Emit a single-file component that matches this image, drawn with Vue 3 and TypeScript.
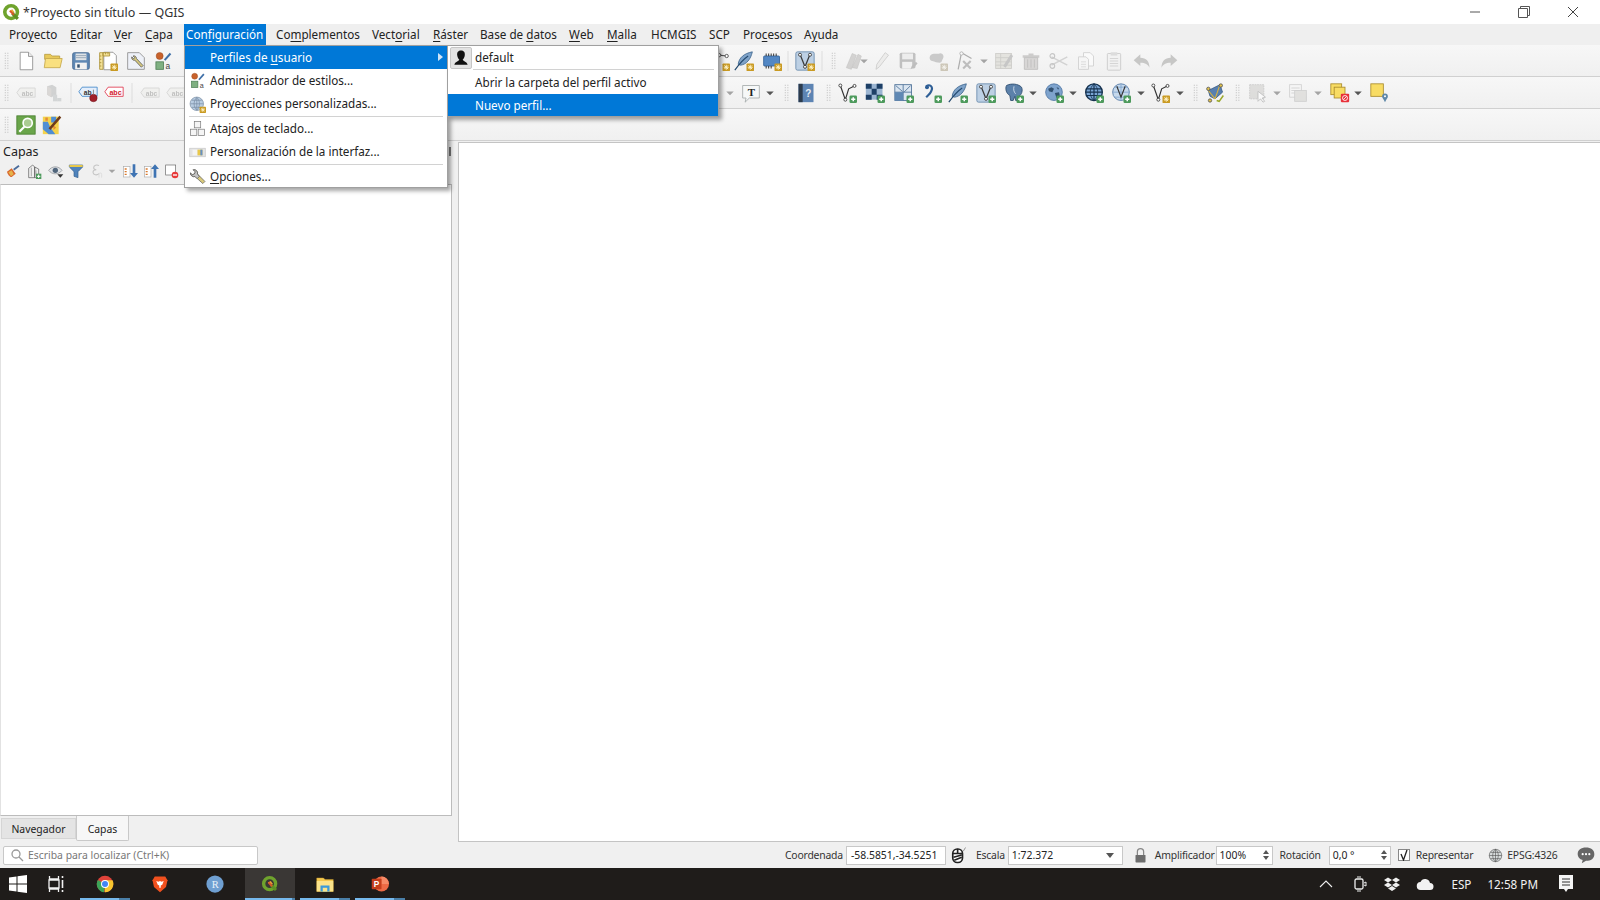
<script setup lang="ts">
interface Tool { x: number; i: string; b?: string; dis?: boolean }

const row1: Tool[] = [
  { x: 7, i: 'dots' }, { x: 26, i: 'new' }, { x: 53, i: 'open' }, { x: 81, i: 'save' }, { x: 108, i: 'saveas', b: 'y' },
  { x: 136, i: 'layout' }, { x: 163, i: 'style' },
  { x: 720, i: 'node', b: 'y' }, { x: 744, i: 'feather', b: 'y' }, { x: 772, i: 'chip', b: 'y' }, { x: 788, i: 'sep' },
  { x: 805, i: 'vlayer', b: 'y' }, { x: 822, i: 'sep' }, { x: 834, i: 'dots' },
  { x: 853, i: 'pencils', dis: true }, { x: 864, i: 'arrow', dis: true }, { x: 881, i: 'pencil', dis: true },
  { x: 908, i: 'saveedit', dis: true }, { x: 938, i: 'cloud', b: 'y', dis: true }, { x: 964, i: 'nodetool', dis: true },
  { x: 984, i: 'arrow', dis: true }, { x: 1004, i: 'table', dis: true }, { x: 1031, i: 'trash', dis: true },
  { x: 1059, i: 'scissors', dis: true }, { x: 1086, i: 'copy', dis: true }, { x: 1114, i: 'paste', dis: true },
  { x: 1142, i: 'undo', dis: true }, { x: 1169, i: 'redo', dis: true }
]

const row2: Tool[] = [
  { x: 7, i: 'dots' }, { x: 26, i: 'abc', dis: true }, { x: 53, i: 'pinmap', dis: true }, { x: 71, i: 'sep' },
  { x: 88, i: 'abcblue' }, { x: 114, i: 'abcred' }, { x: 132, i: 'sep' }, { x: 150, i: 'abc', dis: true }, { x: 176, i: 'abc', dis: true },
  { x: 730, i: 'arrow', dis: true }, { x: 751, i: 'annot' }, { x: 770, i: 'arrow' }, { x: 787, i: 'dots' },
  { x: 806, i: 'book' }, { x: 829, i: 'dots' }, { x: 847, i: 'vnode', b: 'g' }, { x: 875, i: 'checker', b: 'g' },
  { x: 904, i: 'grid', b: 'g' }, { x: 932, i: 'curve', b: 'g' }, { x: 958, i: 'feather', b: 'g' }, { x: 986, i: 'vlayer', b: 'g' },
  { x: 1014, i: 'elephant', b: 'g' }, { x: 1033, i: 'arrow' }, { x: 1054, i: 'globe', b: 'g' }, { x: 1073, i: 'arrow' },
  { x: 1094, i: 'darkglobe', b: 'g' }, { x: 1121, i: 'vglobe', b: 'g' }, { x: 1141, i: 'arrow' },
  { x: 1160, i: 'vnode', b: 'y' }, { x: 1180, i: 'arrow' }, { x: 1196, i: 'dots' }, { x: 1215, i: 'plugin' },
  { x: 1238, i: 'dots' }, { x: 1258, i: 'select', dis: true }, { x: 1277, i: 'arrow', dis: true },
  { x: 1298, i: 'stack', dis: true }, { x: 1318, i: 'arrow', dis: true }, { x: 1340, i: 'yellowstack' }, { x: 1358, i: 'arrow' },
  { x: 1380, i: 'yellowpin' }
]

const row3: Tool[] = [
  { x: 7, i: 'dots' }, { x: 26, i: 'greensearch' }, { x: 52, i: 'mapedit' }
]

const layerTools: Tool[] = [
  { x: 13, i: 'brush' }, { x: 34, i: 'addgroup' }, { x: 56, i: 'eye' }, { x: 76, i: 'filter' },
  { x: 97, i: 'epsilon', dis: true }, { x: 112, i: 'arrow', dis: true }, { x: 130, i: 'expand' }, { x: 151, i: 'collapse' }, { x: 171, i: 'remove' }
]

// Each tool advances from its predecessor by the spacing held in the data.
function cells(tools: Tool[]) {
  return tools.map((t, n) => ({ ...t, gap: n === 0 ? t.x : t.x - tools[n - 1].x }))
}

const toolbars = [row1, row2, row3].map(cells)
const layerCells = cells(layerTools)

const menus: [string, string, string, number][] = [
  ['Pro', 'y', 'ecto', 61], ['', 'E', 'ditar', 44], ['', 'V', 'er', 31], ['', 'C', 'apa', 43], ['Con', 'f', 'iguración', 90],
  ['Co', 'm', 'plementos', 96], ['Vect', 'o', 'rial', 61], ['', 'R', 'áster', 47], ['Base de ', 'd', 'atos', 89], ['', 'W', 'eb', 38],
  ['', 'M', 'alla', 44], ['HCMGIS', '', '', 58], ['SCP', '', '', 34], ['Pro', 'c', 'esos', 61], ['A', 'y', 'uda', 50]
]

const tasks = [
  { i: 'chrome', on: false, under: 'double' }, { i: 'brave', on: false, under: '' }, { i: 'rstudio', on: false, under: '' },
  { i: 'qgis', on: true, under: 'double' }, { i: 'explorer', on: false, under: 'double' }, { i: 'ppt', on: false, under: 'double' }
]
</script>

<template>
  <div class="app">
    <svg class="sprite" width="0" height="0">
      <defs>
        <symbol id="qgis" viewBox="0 0 24 24">
          <circle cx="11.5" cy="11.5" r="8" fill="none" stroke="#6fa32d" stroke-width="4.5" />
          <path d="M9 10l4-2 3 4-3 1z" fill="#e9a23b" />
          <path d="M13 13l7 7" stroke="#5d8f25" stroke-width="4" />
          <path d="M10 10l5 5" stroke="#d9552b" stroke-width="2.4" />
        </symbol>
        <symbol id="dots" viewBox="0 0 24 24">
          <path d="M10 2v20M13 2v20" stroke="#c4c4c4" stroke-width="1.4" stroke-dasharray="1.4 1.6" />
        </symbol>
        <symbol id="sep" viewBox="0 0 24 24"><path d="M12 0v24" stroke="#d9d9d9" /></symbol>
        <symbol id="arrow" viewBox="0 0 24 24"><path d="M7 10h10l-5 5z" fill="#555" /></symbol>
        <symbol id="badge-g" viewBox="0 0 24 24">
          <rect x="15" y="15" width="9" height="9" rx="1.5" fill="#4d9a5c" />
          <path d="M19.5 17v5M17 19.5h5" stroke="#fff" stroke-width="1.8" />
        </symbol>
        <symbol id="badge-y" viewBox="0 0 24 24">
          <rect x="15" y="15" width="9" height="9" rx="1" fill="#c99a22" />
          <path d="M19.5 16.5v6M16.5 19.5h6M17.3 17.3l4.4 4.4M21.7 17.3l-4.4 4.4" stroke="#fff3c8" stroke-width="1.1" />
        </symbol>
        <symbol id="new" viewBox="0 0 24 24">
          <path d="M5 1.5h10l5 5v16H5z" fill="#fff" stroke="#8a8a8a" />
          <path d="M15 1.5v5h5" fill="#eee" stroke="#8a8a8a" />
        </symbol>
        <symbol id="open" viewBox="0 0 24 24">
          <path d="M2 6V4h7l2 2h9v4H2z" fill="#e8c95a" stroke="#b89c40" />
          <path d="M3 9h20l-2.500 11H1.500z" fill="#f9e07f" stroke="#c4a74a" />
        </symbol>
        <symbol id="save" viewBox="0 0 24 24">
          <rect x="2" y="2" width="20" height="20" rx="2" fill="#5f88b4" stroke="#44688f" />
          <rect x="5.5" y="3" width="13" height="8" fill="#dfe3e6" />
          <path d="M6 5.5h12M6 8h12" stroke="#8fa0b2" />
          <rect x="5" y="14" width="14" height="8" fill="#f2f2f2" />
          <rect x="7.5" y="16" width="3" height="4" fill="#33506f" />
        </symbol>
        <symbol id="saveas" viewBox="0 0 24 24">
          <path d="M7 1.5h11l4 4v17H7z" fill="#fff" stroke="#8a8a8a" />
          <path d="M2 2h4v20H2zM6 2h8v4H6z" fill="#f5e39a" stroke="#a98f33" />
          <path d="M2 6h2M2 10h2M2 14h2M2 18h2M9 2v2M12 2v2" stroke="#a98f33" />
        </symbol>
        <symbol id="layout" viewBox="0 0 24 24">
          <path d="M2 2h14l6 6v14H2z" fill="#eef1f8" stroke="#8a8a8a" />
          <path d="M7 7a3 3 0 0 0 3.500 4l8 8.500 2-2-8-8.500a3 3 0 0 0-4-3l2 2-1.500 1.500z" fill="#d7c97d" stroke="#5e5e5e" />
        </symbol>
        <symbol id="style" viewBox="0 0 24 24">
          <circle cx="8" cy="6" r="4.2" fill="#c8622c" stroke="#99491e" stroke-width=".6" />
          <rect x="3.5" y="13" width="9" height="9" fill="#7fb081" stroke="#4f7f55" />
          <path d="M14 11l7-8" stroke="#3f70a8" stroke-width="2.4" />
          <text x="15" y="22" font-size="10" font-family="Liberation Sans" fill="#444">a</text>
        </symbol>
        <symbol id="abc" viewBox="0 0 24 24">
          <path d="M5 6h18v11H5l-4-5.500z" fill="#ececdf" stroke="#b5b5ad" />
          <text x="7" y="15" font-size="8" font-weight="700" font-family="Liberation Sans" fill="#8c8c86">abc</text>
        </symbol>
        <symbol id="abcblue" viewBox="0 0 24 24">
          <path d="M5 5h18v11H5l-4-5.500z" fill="#e4eefb" stroke="#3f86c9" />
          <text x="7" y="14" font-size="8" font-weight="700" font-family="Liberation Sans" fill="#333">ab</text>
          <circle cx="18.5" cy="18" r="4.5" fill="#a11f2a" stroke="#6d1018" stroke-width=".6" />
          <path d="M18.5 8v6" stroke="#777" />
        </symbol>
        <symbol id="abcred" viewBox="0 0 24 24">
          <path d="M5 5h18v11H5l-4-5.500z" fill="#fff" stroke="#e0344a" />
          <text x="6.5" y="14" font-size="8.5" font-weight="700" font-family="Liberation Sans" fill="#d3172f">abc</text>
        </symbol>
        <symbol id="pinmap" viewBox="0 0 24 24">
          <path d="M5 4l6-2 5 3v9l-6 3-5-3z" fill="#a8b1b1" />
          <path d="M5 4l5 3v10l-5-3z" fill="#cdb9a9" />
          <rect x="12" y="14" width="5" height="8" fill="#a9bcc0" /><rect x="17" y="18" width="5" height="4" fill="#a9bcc0" />
        </symbol>
        <symbol id="node" viewBox="0 0 24 24">
          <path d="M3 16l8-11 9 1" fill="none" stroke="#555" stroke-width="1.5" />
          <circle cx="11" cy="5" r="2" fill="#fff" stroke="#444" /><circle cx="20" cy="6" r="2" fill="#fff" stroke="#444" />
        </symbol>
        <symbol id="feather" viewBox="0 0 24 24">
          <path d="M22 1C12 3 6 8 5 16l3 1C15 16 20 10 22 1z" fill="#7fa3c9" stroke="#3e668f" />
          <path d="M1 23C6 16 11 10 17 6" fill="none" stroke="#23496f" stroke-width="1.4" />
        </symbol>
        <symbol id="chip" viewBox="0 0 24 24">
          <rect x="2" y="6" width="19" height="12" rx="1" fill="#5287c4" stroke="#2f5f96" />
          <path d="M5 3v3M8 3v3M11 3v3M14 3v3M17 3v3M5 18v3M8 18v3M11 18v3" stroke="#333" stroke-width="1.2" />
        </symbol>
        <symbol id="vlayer" viewBox="0 0 24 24">
          <rect x="1" y="1" width="22" height="22" rx="2" fill="#bdd0e4" stroke="#6588ab" />
          <path d="M6 4l6 15 6-15" fill="none" stroke="#3b3b3b" stroke-width="1.5" />
          <circle cx="6" cy="4.5" r="1.8" fill="#fff" stroke="#333" /><circle cx="18" cy="4.5" r="1.8" fill="#fff" stroke="#333" /><circle cx="12" cy="19" r="1.8" fill="#fff" stroke="#333" />
        </symbol>
        <symbol id="pencils" viewBox="0 0 24 24">
          <path d="M4 20L11 3l5 2-6 17zM11 20l7-16 4 2-5 15z" fill="#b8b0a6" stroke="#908a82" stroke-width=".6" />
        </symbol>
        <symbol id="pencil" viewBox="0 0 24 24">
          <path d="M6 22l1-6L17 2l4 3-11 14z" fill="#e6e4dc" stroke="#a5a39a" />
        </symbol>
        <symbol id="saveedit" viewBox="0 0 24 24">
          <rect x="2" y="2" width="19" height="19" rx="2" fill="#8d8d8d" />
          <rect x="5" y="3" width="13" height="7" fill="#e5e5e5" /><rect x="5" y="13" width="12" height="8" fill="#efefef" />
          <path d="M15 22l1.500-4 5-5 2 2-5 5z" fill="#888" />
        </symbol>
        <symbol id="cloud" viewBox="0 0 24 24">
          <path d="M3 5c3-3 8-1 11-2s6 3 4 6-1 5-4 5-6-1-9-2-4-4-2-7z" fill="#9f9f9f" />
        </symbol>
        <symbol id="nodetool" viewBox="0 0 24 24">
          <path d="M5 22L9 2l12 7" fill="none" stroke="#666" stroke-width="1.5" />
          <path d="M11 12l9 9M20 12l-9 9" stroke="#888" stroke-width="2.6" />
          <circle cx="9" cy="3" r="2" fill="#fff" stroke="#666" />
        </symbol>
        <symbol id="table" viewBox="0 0 24 24">
          <rect x="2" y="3" width="19" height="18" fill="#d8d2b0" stroke="#aaa58a" />
          <path d="M2 8h19M2 13h19M2 17h19M8 3v18" stroke="#aaa58a" />
          <path d="M11 18L20 4l3 2-9 14z" fill="#999" />
        </symbol>
        <symbol id="trash" viewBox="0 0 24 24">
          <path d="M2 5h20v3H2zM9 3h6v2H9z" fill="#a9a29d" />
          <path d="M4 8h16v14H4z" fill="#c5b8b2" stroke="#8d8580" />
          <path d="M8 10v10M12 10v10M16 10v10" stroke="#8d8580" />
        </symbol>
        <symbol id="scissors" viewBox="0 0 24 24">
          <path d="M3 7l19 10M3 17L22 7" stroke="#b2b2b2" stroke-width="1.8" />
          <circle cx="4" cy="6" r="2.8" fill="none" stroke="#999" stroke-width="1.4" /><circle cx="4" cy="18" r="2.8" fill="none" stroke="#999" stroke-width="1.4" />
        </symbol>
        <symbol id="copy" viewBox="0 0 24 24">
          <path d="M9 2h8l4 4v12H9z" fill="#fff" stroke="#a9a9a9" /><path d="M3 7h9l3 3v12H3z" fill="#f8f8f8" stroke="#a9a9a9" />
          <path d="M6 13h6M6 16h6M6 19h6" stroke="#bbb" />
        </symbol>
        <symbol id="paste" viewBox="0 0 24 24">
          <rect x="4" y="3" width="16" height="20" rx="1" fill="#efefef" stroke="#9c9c9c" /><rect x="8" y="1.5" width="8" height="4" fill="#c3c3c3" />
          <path d="M7 9h10M7 12h10M7 15h10M7 18h10" stroke="#aaa" />
        </symbol>
        <symbol id="undo" viewBox="0 0 24 24"><path d="M2 11l8-7v4c7 0 11 4 11 12-2-4-5-6-11-6v4z" fill="#9b9b94" /></symbol>
        <symbol id="redo" viewBox="0 0 24 24"><path d="M22 11l-8-7v4C7 8 3 12 3 20c2-4 5-6 11-6v4z" fill="#9b9b94" /></symbol>
        <symbol id="annot" viewBox="0 0 24 24">
          <path d="M2 3h20v15H10l-5 5 1-5H2z" fill="#f6f8f8" stroke="#a3a9a9" />
          <text x="8" y="15" font-size="13" font-weight="700" font-family="Liberation Serif" fill="#222">T</text>
        </symbol>
        <symbol id="book" viewBox="0 0 24 24">
          <rect x="3" y="1" width="18" height="22" fill="#5d84b3" /><rect x="3" y="1" width="5" height="22" fill="#2c3b4d" />
          <text x="11" y="17" font-size="12" font-weight="700" font-family="Liberation Sans" fill="#e8eef5">?</text>
        </symbol>
        <symbol id="vnode" viewBox="0 0 24 24">
          <path d="M4 3l6 17 4-13 8-4" fill="none" stroke="#333" stroke-width="1.4" />
          <circle cx="4" cy="3" r="1.8" fill="#fff" stroke="#333" /><circle cx="10" cy="20" r="1.8" fill="#fff" stroke="#333" /><circle cx="21" cy="3.5" r="1.8" fill="#fff" stroke="#333" />
        </symbol>
        <symbol id="checker" viewBox="0 0 24 24">
          <rect x="1" y="1" width="20" height="19" fill="#9bb5d2" />
          <path d="M1 1h7v6H1zM14 1h7v6h-7zM8 7h6v7H8zM1 14h7v6H1zM14 14h7v6h-7z" fill="#1d3f66" />
        </symbol>
        <symbol id="grid" viewBox="0 0 24 24">
          <rect x="1" y="2" width="20" height="19" fill="#dbe6f1" stroke="#4b6f96" />
          <path d="M1 11h20M11 2v19M2 3l8 7M12 11l8-8" stroke="#4b6f96" />
          <rect x="1" y="11" width="10" height="10" fill="#5f88b4" />
        </symbol>
        <symbol id="curve" viewBox="0 0 24 24"><path d="M5 4c4-3 9 0 6 6-1 3-4 5-6 7" fill="none" stroke="#2f5f96" stroke-width="2.6" /><circle cx="6" cy="5" r="2.4" fill="#2f5f96" /></symbol>
        <symbol id="elephant" viewBox="0 0 24 24">
          <path d="M3 3c6-3 14-2 18 2 2 4 0 9-3 11l-1 5h-3l-1-5-2 5H8l-1-6C3 13 1 7 3 3z" fill="#5c81aa" stroke="#2b4a6c" />
          <path d="M12 4c-1 4 0 7 2 9" fill="none" stroke="#dbe7f2" />
        </symbol>
        <symbol id="globe" viewBox="0 0 24 24">
          <circle cx="12" cy="11" r="10" fill="#7ea3cd" stroke="#4f76a3" />
          <path d="M5 7l4-2 3 2-2 4-4-1zM13 12l5-1 1 4-4 3zM15 5l3 1-1 2z" fill="#31506f" />
        </symbol>
        <symbol id="darkglobe" viewBox="0 0 24 24">
          <circle cx="12" cy="11" r="10" fill="#7ba6d5" stroke="#16324f" stroke-width="1.6" />
          <path d="M2 11h20M3 7h18M3 15h18M12 1v20" stroke="#16324f" stroke-width="1.4" />
          <path d="M12 1c-6 5-6 15 0 20M12 1c6 5 6 15 0 20" fill="none" stroke="#16324f" />
        </symbol>
        <symbol id="vglobe" viewBox="0 0 24 24">
          <circle cx="12" cy="11" r="10" fill="#c6d9ec" stroke="#4f76a3" />
          <path d="M2 11h20M12 1v20M4 5h16M4 17h16" stroke="#7ea3cd" />
          <path d="M7 4l5 13 5-13" fill="none" stroke="#333" stroke-width="1.4" />
        </symbol>
        <symbol id="plugin" viewBox="0 0 24 24">
          <path d="M4 9l14-7 3 9-9 8-6-3z" fill="#577fb0" stroke="#3a5c86" />
          <path d="M4 9l8 10M18 2l-6 17" stroke="#d9b33c" stroke-width="1.3" />
          <circle cx="4" cy="7" r="2" fill="#e1c24a" stroke="#555" /><circle cx="19" cy="3" r="2" fill="#e1c24a" stroke="#555" /><circle cx="6" cy="21" r="2" fill="#e1c24a" stroke="#555" />
          <path d="M14 21l3 1 5-7" fill="none" stroke="#9aa82a" stroke-width="1.8" />
        </symbol>
        <symbol id="select" viewBox="0 0 24 24">
          <rect x="2" y="2" width="17" height="17" fill="#c9c7ba" stroke="#9f9f9f" stroke-dasharray="2 1" />
          <path d="M12 10l9 7-4 1 3 4-2 1-3-4-3 3z" fill="#fff" stroke="#888" />
        </symbol>
        <symbol id="stack" viewBox="0 0 24 24">
          <rect x="2" y="2" width="14" height="15" fill="#f5f5f5" stroke="#aaa" /><rect x="8" y="9" width="14" height="13" fill="#d0cebf" stroke="#aaa" />
          <path d="M4 6h10M4 9h10M4 12h4" stroke="#aaa" />
        </symbol>
        <symbol id="yellowstack" viewBox="0 0 24 24">
          <rect x="1" y="1" width="13" height="13" fill="#f8dc64" stroke="#a88a2a" /><rect x="5" y="5" width="13" height="13" fill="#f8dc64" stroke="#a88a2a" />
          <rect x="13" y="13" width="10" height="10" rx="1" fill="#e8303a" /><circle cx="18" cy="18" r="3" fill="none" stroke="#fff" /><path d="M16 20l4-4" stroke="#fff" />
        </symbol>
        <symbol id="yellowpin" viewBox="0 0 24 24">
          <rect x="1" y="1" width="15" height="15" fill="#f8dc64" stroke="#a88a2a" />
          <path d="M18 23c-2-4-3.500-5-3.500-7a3.500 3.500 0 0 1 7 0c0 2-1.500 3-3.500 7z" fill="#5f88a8" /><circle cx="18" cy="16" r="1.2" fill="#fff" />
        </symbol>
        <symbol id="greensearch" viewBox="0 0 24 24">
          <rect x="1" y="1" width="22" height="22" fill="#6aa54a" stroke="#4a8030" />
          <circle cx="14" cy="9.5" r="5.5" fill="#aacc92" stroke="#fff" stroke-width="2" />
          <path d="M10 14l-6 6" stroke="#fff" stroke-width="2.6" />
        </symbol>
        <symbol id="mapedit" viewBox="0 0 24 24">
          <rect x="1" y="2" width="19" height="21" fill="#f4d24b" />
          <path d="M1 8h6l3 7 6 8H8l-7-6zM11 2h6v7h-6z" fill="#4f8ed4" />
          <path d="M4 3h3v4H4zM13 12l4 3-3 3z" fill="#e28b3a" />
          <path d="M9 17L22 2" stroke="#6e3c1b" stroke-width="3" />
        </symbol>
        <symbol id="brush" viewBox="0 0 24 24">
          <path d="M3 13l7-5 6 8-6 5c-3 0-6-4-7-8z" fill="#d9662c" />
          <path d="M5 14l5-3 3 6-4 3z" fill="#e5b34b" />
          <path d="M13 10l8-6" stroke="#4b6c9b" stroke-width="2.8" />
        </symbol>
        <symbol id="addgroup" viewBox="0 0 24 24">
          <path d="M4 8l6-5 3 3v16H4zM13 6l6 3v13h-6z" fill="#f0f0f0" stroke="#555" />
          <path d="M8 7v13M15 11v8" stroke="#888" />
          <rect x="15" y="16" width="8" height="8" fill="#4d9a5c" /><path d="M19 17.5v5M16.5 20h5" stroke="#fff" stroke-width="1.5" />
        </symbol>
        <symbol id="eye" viewBox="0 0 24 24">
          <path d="M1 11c5-7 15-7 20 0-5 7-15 7-20 0z" fill="#dfe2e6" stroke="#85898e" />
          <circle cx="11" cy="11" r="4" fill="#51667c" />
          <path d="M14 17h9l-4.500 5z" fill="#333" />
        </symbol>
        <symbol id="filter" viewBox="0 0 24 24">
          <path d="M2 3h20v3l-7 7v9l-6-2v-7L2 6z" fill="#4f83bc" stroke="#35618f" />
          <rect x="2" y="3" width="20" height="3" fill="#e7c84a" />
        </symbol>
        <symbol id="epsilon" viewBox="0 0 24 24">
          <path d="M15 4c-3-2-8-1-8 3 0 2 2 3 4 3-3 0-5 2-5 4 0 4 6 5 9 2" fill="none" stroke="#999" stroke-width="1.6" />
          <path d="M15 22v-5a2 2 0 0 1 4 0v5" fill="none" stroke="#bbb" />
        </symbol>
        <symbol id="expand" viewBox="0 0 24 24">
          <rect x="2" y="5" width="10" height="16" fill="#fff" stroke="#aaa" />
          <path d="M4 9h3M4 13h3M4 17h3" stroke="#d9782c" stroke-width="2" />
          <path d="M16 2v13h-4l6 7 6-7h-4V2z" fill="#3f74b3" />
        </symbol>
        <symbol id="collapse" viewBox="0 0 24 24">
          <rect x="2" y="5" width="10" height="16" fill="#fff" stroke="#aaa" />
          <path d="M4 9h3M4 13h3M4 17h3" stroke="#d9782c" stroke-width="2" />
          <path d="M16 22V9h-4l6-7 6 7h-4v13z" fill="#3f74b3" />
        </symbol>
        <symbol id="remove" viewBox="0 0 24 24">
          <rect x="4" y="3" width="15" height="15" fill="#fff" stroke="#666" />
          <rect x="13" y="13" width="10" height="10" rx="5" fill="#e83a3a" /><path d="M15 18h6" stroke="#fff" stroke-width="2" />
        </symbol>
        <symbol id="blocks" viewBox="0 0 24 24">
          <g fill="#f5f5f5" stroke="#7b7b7b"><rect x="7.5" y="2" width="9" height="9" /><rect x="2" y="13" width="9" height="9" /><rect x="13" y="13" width="9" height="9" /></g>
        </symbol>
        <symbol id="ui" viewBox="0 0 24 24">
          <rect x="1" y="6" width="22" height="12" fill="#e4e4e4" stroke="#c8c8c8" />
          <rect x="5" y="8" width="7" height="8" fill="#f4f4f4" /><rect x="12" y="8" width="7" height="8" fill="#e9c84a" /><rect x="16" y="8" width="3" height="8" fill="#6690c4" />
        </symbol>
        <symbol id="wrench" viewBox="0 0 24 24">
          <path d="M2 7a5 5 0 0 0 6.500 5l11 10 3-3L12 8.500A5 5 0 0 0 6 2.500l3 3-1.500 3-3 1z" fill="#d9c97a" stroke="#5a5a5a" />
          <path d="M2 7a5 5 0 0 0 6.500 5l3 3 3-3-2.500-3.500A5 5 0 0 0 6 2.500l3 3-1.500 3-3 1z" fill="#c4c4c4" stroke="#5a5a5a" />
        </symbol>
        <symbol id="projection" viewBox="0 0 24 24">
          <circle cx="11" cy="11" r="9.5" fill="#b9cde2" stroke="#7a8ea5" />
          <path d="M2 11h18M4 6h14M4 16h14M11 2v18" stroke="#7a8ea5" />
          <path d="M11 2c-5 5-5 13 0 18M11 2c5 5 5 13 0 18" fill="none" stroke="#7a8ea5" />
        </symbol>
        <symbol id="user" viewBox="0 0 24 24">
          <path d="M12 3c-4 0-5 3-4.500 6 .2 2 1.500 4 2.500 5-1 2-5 2-6 6h16c-1-4-5-4-6-6 1-1 2.300-3 2.500-5C17 6 16 3 12 3z" fill="#111" />
        </symbol>
        <symbol id="chrome" viewBox="0 0 24 24">
          <circle cx="12" cy="12" r="11" fill="#e0433a" />
          <path d="M12 12L2.500 6.500A11 11 0 0 0 11 23z" fill="#3ba558" />
          <path d="M12 12v11A11 11 0 0 0 22 7H12z" fill="#f7c52f" />
          <circle cx="12" cy="12" r="5.3" fill="#fff" /><circle cx="12" cy="12" r="4" fill="#4285f4" />
        </symbol>
        <symbol id="brave" viewBox="0 0 24 24">
          <path d="M5 2h14l3 5-2 9-8 7-8-7-2-9z" fill="#f0501e" />
          <path d="M7 8l3 1 2-1 2 1 3-1-2 5-2 1v3h-2v-3l-2-1z" fill="#fff" />
        </symbol>
        <symbol id="rstudio" viewBox="0 0 24 24">
          <circle cx="12" cy="12" r="11.5" fill="#6f9fd1" />
          <text x="7.5" y="17" font-size="14" font-family="Liberation Serif" fill="#eaf2fa">R</text>
        </symbol>
        <symbol id="explorer" viewBox="0 0 24 24">
          <path d="M1 4h9l2 2h11v16H1z" fill="#f4c84f" stroke="#c89a2b" stroke-width=".6" />
          <rect x="1" y="8" width="22" height="14" fill="#fbe38a" />
          <rect x="6" y="14" width="12" height="8" fill="#3a9ad9" /><rect x="9" y="17" width="6" height="5" fill="#fbe38a" />
        </symbol>
        <symbol id="ppt" viewBox="0 0 24 24">
          <circle cx="14" cy="12" r="10" fill="#ec6a45" />
          <path d="M14 2a10 10 0 0 1 10 10H14z" fill="#f58a66" />
          <rect x="1" y="5" width="13" height="14" rx="1" fill="#c43e1c" />
          <text x="3.5" y="16.5" font-size="11" font-weight="700" font-family="Liberation Sans" fill="#fff">P</text>
        </symbol>
        <symbol id="mouse" viewBox="0 0 24 24">
          <rect x="5" y="4" width="13" height="18" rx="6" fill="#fff" stroke="#222" stroke-width="2.2" />
          <path d="M5 10h13M11.5 4v6M6 15l11-3M7 19l10-4" stroke="#222" stroke-width="2.2" />
          <path d="M19 7l3-5" stroke="#777" />
        </symbol>
        <symbol id="lock" viewBox="0 0 24 24">
          <path d="M7 11V6a5 5 0 0 1 10 0v5" fill="none" stroke="#888" stroke-width="2" />
          <rect x="4" y="11" width="16" height="12" rx="1" fill="#6d6d6d" />
        </symbol>
        <symbol id="crs" viewBox="0 0 24 24">
          <circle cx="12" cy="12" r="10" fill="#d7dcdc" stroke="#555" />
          <path d="M2 12h20M4 7h16M4 17h16M12 2v20M12 2c-6 5-6 15 0 20M12 2c6 5 6 15 0 20" fill="none" stroke="#555" />
        </symbol>
        <symbol id="msg" viewBox="0 0 24 24">
          <path d="M12 3c6 0 10 3 10 8s-4 8-10 8l-5 3 1-4c-4-1-6-4-6-7 0-5 4-8 10-8z" fill="#666" />
          <circle cx="8" cy="11" r="1.3" fill="#fff" /><circle cx="12" cy="11" r="1.3" fill="#fff" /><circle cx="16" cy="11" r="1.3" fill="#fff" />
        </symbol>
      </defs>
    </svg>

    <header class="titlebar">
      <svg class="title-logo" viewBox="0 0 24 24"><use href="#qgis" /></svg>
      <span class="title-text">*Proyecto sin título — QGIS</span>
      <div class="win-buttons">
        <svg width="12" height="12" viewBox="0 0 12 12"><path d="M1 6h10" stroke="#555" /></svg>
        <svg width="12" height="12" viewBox="0 0 12 12"><path d="M.5 2.5h9v9h-9zM2.500 2.500v-2h9v9h-2" fill="none" stroke="#555" /></svg>
        <svg width="12" height="12" viewBox="0 0 12 12"><path d="M1 1l10 10M11 1L1 11" stroke="#444" /></svg>
      </div>
    </header>

    <nav class="menubar">
      <span v-for="m in menus" :key="m[0] + m[2]" class="menu-item" :class="{ active: m[2] === 'iguración' }" :style="{ width: m[3] + 'px' }">{{ m[0] }}<u v-if="m[1]">{{ m[1] }}</u>{{ m[2] }}</span>
    </nav>

    <div v-for="(bar, n) in toolbars" :key="n" class="toolbar">
      <span v-for="(t, k) in bar" :key="k" class="tool" :class="{ dis: t.dis }" :style="{ marginLeft: t.gap + 'px' }">
        <svg class="tool-icon" :class="{ small: t.i === 'arrow' }" viewBox="0 0 24 24">
          <use :href="'#' + t.i" />
          <use v-if="t.b" :href="'#badge-' + t.b" />
        </svg>
      </span>
    </div>

    <main class="workspace">
      <aside class="panel">
        <div class="panel-title"><span>Capas</span><i class="float-btn"></i></div>
        <div class="panel-tools">
          <span v-for="(t, k) in layerCells" :key="k" class="tool" :class="{ dis: t.dis }" :style="{ marginLeft: t.gap + 'px' }">
            <svg class="layer-icon" viewBox="0 0 24 24"><use :href="'#' + t.i" /></svg>
          </span>
        </div>
        <div class="layer-list"></div>
        <div class="tabs">
          <span class="tab">Navegador</span>
          <span class="tab current">Capas</span>
        </div>
      </aside>
      <section class="canvas"></section>
    </main>

    <footer class="statusbar">
      <div class="locator">
        <svg width="14" height="14" viewBox="0 0 14 14"><circle cx="6" cy="6" r="4" fill="none" stroke="#999" stroke-width="1.3" /><path d="M9 9l4 4" stroke="#999" stroke-width="1.3" /></svg>
        <span>Escriba para localizar (Ctrl+K)</span>
      </div>
      <div class="status-right">
        <span class="label">Coordenada</span>
        <span class="field coord">-58.5851,-34.5251</span>
        <svg class="mouse" viewBox="0 0 24 24"><use href="#mouse" /></svg>
        <span class="label">Escala</span>
        <span class="field scale">1:72.372<i class="caret"></i></span>
        <svg class="lock" viewBox="0 0 24 24"><use href="#lock" /></svg>
        <span class="label">Amplificador</span>
        <span class="field zoom">100%<i class="spin"></i></span>
        <span class="label rot">Rotación</span>
        <span class="field rotation">0,0 °<i class="spin"></i></span>
        <span class="check">
          <svg width="12" height="12" viewBox="0 0 12 12"><path d="M3 5l2.500 6L9 1" fill="none" stroke="#222" stroke-width="1.3" /></svg>
        </span>
        <span class="label render">Representar</span>
        <svg class="crs" viewBox="0 0 24 24"><use href="#crs" /></svg>
        <span class="label epsg">EPSG:4326</span>
        <svg class="msg" viewBox="0 0 24 24"><use href="#msg" /></svg>
      </div>
    </footer>

    <div class="taskbar">
      <svg class="win-logo" viewBox="0 0 18 18"><path d="M0 2.500l7.500-1v7H0zM8.500 1.300L18 0v8.500H8.500zM0 9.500h7.500v7L0 15.500zM8.500 9.500H18V18l-9.500-1.300z" fill="#fff" /></svg>
      <svg class="task-view" viewBox="0 0 18 18"><path d="M2.500 1v3h9V1M2.500 17v-3h9v3M2 5h10v8H2z" fill="none" stroke="#f2f2f2" stroke-width="1.3" /><path d="M15.5 1v2M15.5 5v8M15.5 15v2" stroke="#f2f2f2" stroke-width="1.6" /></svg>
      <span v-for="t in tasks" :key="t.i" class="task" :class="[{ on: t.on }, t.under]">
        <svg class="task-icon" viewBox="0 0 24 24"><use :href="'#' + t.i" /></svg>
      </span>
      <div class="tray">
        <svg width="14" height="14" viewBox="0 0 14 14"><path d="M1 10l6-6 6 6" fill="none" stroke="#eee" stroke-width="1.1" /></svg>
        <svg width="14" height="18" viewBox="0 0 14 18"><rect x="2" y="4" width="8" height="10" rx="1.5" fill="none" stroke="#eee" stroke-width="1.3" /><path d="M4 2h4M4 16h4M11 8l2-1v4l-2-1" fill="none" stroke="#eee" /></svg>
        <svg width="16" height="16" viewBox="0 0 16 16"><path d="M4 1.500L8 4 4 6.500 0 4zM12 1.500L16 4l-4 2.500L8 4zM4 6.500L8 9l-4 2.500L0 9zM12 6.500L16 9l-4 2.500L8 9zM8 10l4 2.500L8 15l-4-2.500z" fill="#f0f0f0" /></svg>
        <svg width="18" height="14" viewBox="0 0 18 14"><path d="M5 13a4 4 0 0 1-.500-8A5 5 0 0 1 14 6a3.500 3.500 0 0 1 0 7z" fill="#f2f2f2" /></svg>
        <span class="lang">ESP</span>
        <span class="clock">12:58 PM</span>
        <svg width="16" height="20" viewBox="0 0 16 20"><path d="M1 1h14v14h-5l-2 3-2-3H1z" fill="#f5f5f5" /><path d="M4 5h8M4 8h8M4 11h8" stroke="#333" /></svg>
      </div>
    </div>

    <div class="popup main-menu">
      <div class="row selected"><span class="row-icon"></span><span>Perfiles de <u>u</u>suario</span><i class="chev"></i></div>
      <div class="row"><svg class="row-icon" viewBox="0 0 24 24"><use href="#style" /></svg><span>Administrador de estilos...</span></div>
      <div class="row"><svg class="row-icon" viewBox="0 0 24 24"><use href="#projection" /><use href="#badge-y" /></svg><span>Proyecciones personalizadas...</span></div>
      <hr />
      <div class="row"><svg class="row-icon" viewBox="0 0 24 24"><use href="#blocks" /></svg><span>Atajos de teclado...</span></div>
      <div class="row"><svg class="row-icon" viewBox="0 0 24 24"><use href="#ui" /></svg><span>Personalización de la interfaz...</span></div>
      <hr />
      <div class="row"><svg class="row-icon" viewBox="0 0 24 24"><use href="#wrench" /></svg><span><u>O</u>pciones...</span></div>
    </div>

    <div class="popup sub-menu">
      <div class="sub-row first">
        <span class="user-box"><svg viewBox="0 0 24 24"><use href="#user" /></svg></span>
        <span class="default-name">default</span>
      </div>
      <hr />
      <div class="sub-row">Abrir la carpeta del perfil activo</div>
      <div class="sub-row selected">Nuevo perfil...</div>
    </div>
  </div>
</template>

<style scoped>
.sprite { position: absolute; }
.app {
  position: relative;
  width: 1600px;
  height: 900px;
  overflow: hidden;
  display: flex;
  flex-direction: column;
  background: #f0f0f0;
  color: #222;
  font-family: "Noto Sans", "Open Sans", sans-serif;
  font-size: 11.7px;
}
.titlebar {
  height: 24px;
  flex: none;
  display: flex;
  align-items: center;
  background: #fff;
  font-size: 12.5px;
  color: #333;
}
.title-logo { width: 19px; height: 19px; margin-left: 2px; margin-right: 2px; }
.win-buttons { margin-left: auto; display: flex; gap: 37px; padding-right: 21px; }
.menubar {
  height: 21px;
  flex: none;
  display: flex;
  align-items: stretch;
  padding-left: 5px;
  background: #efefef;
}
.menu-item { display: flex; align-items: center; white-space: pre; padding-left: 4px; padding-bottom: 1px; box-sizing: border-box; }
.menu-item.active { background: #0078d7; color: #fff; padding-left: 2px; width: 82px !important; margin-right: 6px; }
u { text-underline-offset: 2px; }
.toolbar {
  height: 32px;
  flex: none;
  display: flex;
  align-items: center;
  box-sizing: border-box;
  border-bottom: 1px solid #d0d0d0;
  background: linear-gradient(#f7f7f7, #f0f0f0);
}
.tool { width: 0; display: flex; justify-content: center; align-items: center; flex: none; }
.tool.dis { filter: grayscale(.75) opacity(.5); }
.tool-icon { width: 20px; height: 20px; flex: none; overflow: visible; }
.tool-icon.small { width: 18px; height: 18px; }
.workspace { flex: 1; min-height: 0; display: flex; }
.panel { width: 452px; flex: none; display: flex; flex-direction: column; }
.panel-title { height: 21px; display: flex; align-items: center; justify-content: space-between; padding-left: 3px; font-size: 12.5px; }
.float-btn { width: 2px; height: 9px; margin-right: 1px; background: #777; }
.panel-tools { height: 18px; margin-bottom: 4px; display: flex; align-items: center; }
.layer-icon { width: 16px; height: 16px; flex: none; overflow: visible; }
.layer-list { flex: 1; background: #fff; border: 1px solid #bcbcbc; border-left-color: #e2e2e2; }
.tabs { height: 26px; display: flex; align-items: flex-start; padding-left: 1px; }
.tab {
  width: 75px;
  height: 21px;
  margin-top: 2px;
  display: flex;
  align-items: center;
  justify-content: center;
  font-size: 10.4px;
  background: #e4e4e4;
  border: 1px solid #d5d5d5;
  box-sizing: border-box;
}
.tab.current { width: 53px; height: 25px; margin-top: 0; padding-top: 2px; background: #f7f7f7; border-color: #c9c9c9; border-top: 0; border-radius: 0 0 2px 2px; }
.canvas { flex: 1; margin: 1px 0 0 6px; background: #fff; border: 1px solid #c4c4c4; border-right: 0; }
.statusbar { height: 26px; flex: none; display: flex; align-items: center; font-size: 10.4px; }
.locator {
  width: 255px;
  height: 19px;
  flex: none;
  margin-left: 3px;
  display: flex;
  align-items: center;
  gap: 4px;
  padding-left: 6px;
  box-sizing: border-box;
  background: #fff;
  border: 1px solid #c8c8c8;
  border-radius: 2px;
  color: #777;
}
.status-right { flex: 1; display: flex; align-items: center; padding-left: 527px; }
.label { white-space: nowrap; color: #333; letter-spacing: -.2px; flex: none; }
.field {
  position: relative;
  height: 19px;
  line-height: 17px;
  margin-left: 3px;
  padding-left: 3px;
  box-sizing: border-box;
  background: #fff;
  border: 1px solid #c8c8c8;
  white-space: nowrap;
  flex: none;
}
.coord { width: 100px; padding-left: 4px; }
.mouse { width: 18px; height: 18px; margin: 0 9px 0 3px; flex: none; }
.scale { width: 115px; }
.lock { width: 15px; height: 17px; margin: 0 7px 0 10px; flex: none; }
.zoom { width: 57px; margin-left: 1px; }
.rot { margin-left: 7px; }
.rotation { width: 62px; margin-left: 8px; }
.caret { position: absolute; right: 8px; top: 6px; border: 4px solid transparent; border-top: 5px solid #555; border-bottom: 0; }
.spin { position: absolute; right: 3px; top: 3px; width: 0; height: 0; border: 3px solid transparent; border-bottom: 4px solid #555; border-top: 0; }
.spin::after { content: ""; position: absolute; left: -3px; top: 6px; border: 3px solid transparent; border-top: 4px solid #555; border-bottom: 0; }
.check { width: 12px; height: 12px; flex: none; margin-left: 7px; background: #fff; border: 1px solid #888; box-sizing: border-box; display: flex; overflow: visible; }
.check svg { flex: none; margin: -1px; }
.render { margin-left: 6px; }
.crs { width: 15px; height: 15px; margin-left: 15px; flex: none; }
.epsg { margin-left: 4px; }
.msg { width: 20px; height: 20px; margin-left: 19px; flex: none; }
.taskbar { height: 32px; flex: none; display: flex; align-items: center; background: #1f1c1a; }
.win-logo { width: 18px; height: 18px; margin-left: 9px; flex: none; }
.task-view { width: 18px; height: 18px; margin-left: 20px; margin-right: 15px; flex: none; }
.task { position: relative; width: 50px; height: 32px; margin-right: 5px; display: flex; align-items: center; justify-content: center; flex: none; }
.task.on { background: #3a3735; }
.task::after { content: ""; position: absolute; left: 3px; right: 3px; bottom: 0; height: 2px; background: transparent; }
.task.double::after { left: 0; right: 0; background: linear-gradient(90deg, #76b9ed 78%, #4a7fa8 78%); }
.task.on.double::after { background: linear-gradient(90deg, #76b9ed 94%, #4a7fa8 94%); }
.task-icon { width: 18px; height: 18px; }
.tray { margin-left: auto; display: flex; align-items: center; color: #f2f2f2; }
.tray > svg:nth-child(1) { margin-right: 20px; }
.tray > svg:nth-child(2) { margin-right: 17px; }
.tray > svg:nth-child(3) { margin-right: 16px; }
.tray > svg:nth-child(4) { margin-right: 17px; }
.lang { font-size: 11.7px; margin-right: 16px; }
.clock { font-size: 11.7px; margin-right: 20px; }
.tray > svg:last-child { margin-right: 26px; }
.popup {
  position: absolute;
  box-sizing: border-box;
  background: #fff;
  border: 1px solid #a0a0a0;
  box-shadow: 3px 3px 4px rgba(0, 0, 0, .35);
}
.popup hr { margin: 0 4px; border: 0; border-top: 1px solid #d2d2d2; }
.main-menu { left: 184px; top: 45px; width: 264px; height: 143px; z-index: 1; }
.row { height: 23.5px; display: flex; align-items: center; position: relative; padding-left: 4px; white-space: nowrap; }
.row > span:last-of-type { padding-bottom: 2px; }
.row.selected { background: #0078d7; color: #fff; height: 23px; }
.row-icon { width: 17px; height: 17px; flex: none; margin-right: 4px; overflow: visible; }
.row.selected .row-icon { height: 1px; }
.chev { position: absolute; right: 4px; top: 7px; border: 4px solid transparent; border-left: 5px solid #cfe4f7; border-right: 0; }
.sub-menu { left: 447px; top: 45px; width: 272px; height: 72px; z-index: 2; }
.sub-row { height: 24px; display: flex; align-items: center; padding-left: 27px; padding-bottom: 1px; box-sizing: border-box; white-space: nowrap; }
.sub-row.first { height: 23px; padding-left: 2px; padding-bottom: 0; gap: 3px; }
.default-name { padding-bottom: 2px; }
.sub-row.selected { background: #0078d7; color: #fff; height: 22px; }
.sub-menu hr { margin: 0 4px 0 25px; }
.user-box {
  width: 22px;
  height: 22px;
  display: flex;
  align-items: center;
  justify-content: center;
  background: #e3e3e3;
  border: 1px solid #c6c6c6;
  border-radius: 2px;
  box-sizing: border-box;
}
.user-box svg { width: 20px; height: 20px; }
</style>
